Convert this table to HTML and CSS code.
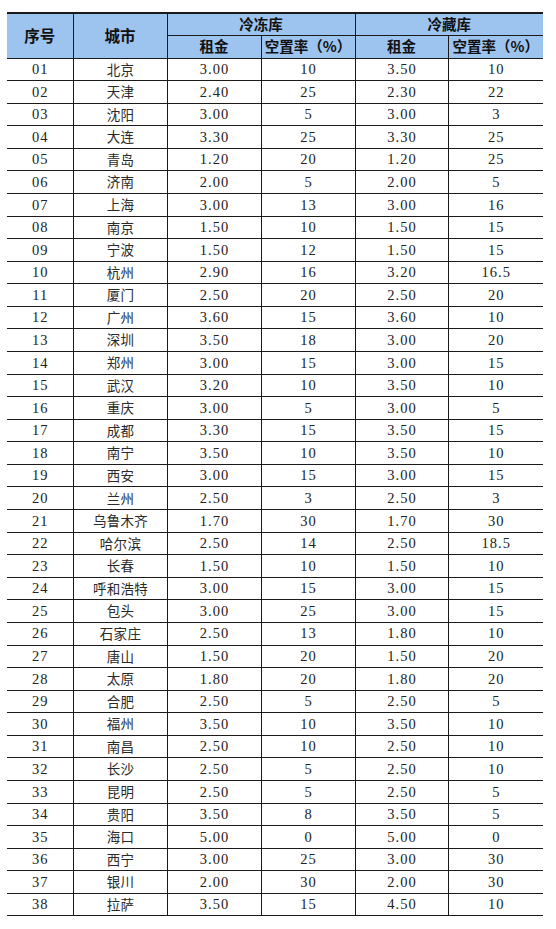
FILE: index.html
```html
<!DOCTYPE html>
<html lang="zh-CN">
<head>
<meta charset="utf-8">
<title>冷库租金与空置率</title>
<link rel="stylesheet" href="styles.css">
</head>
<body>
<table class="rent">
<colgroup>
<col class="c-no"><col class="c-city"><col class="c-a"><col class="c-b"><col class="c-c"><col class="c-d">
</colgroup>
<thead>
<tr class="h1"><th rowspan="2" class="big">序号</th><th rowspan="2" class="big">城市</th><th colspan="2">冷冻库</th><th colspan="2">冷藏库</th></tr>
<tr class="h2"><th>租金</th><th>空置率（%）</th><th>租金</th><th>空置率（%）</th></tr>
</thead>
<tbody>
<tr><td>01</td><td class="city">北京</td><td>3.00</td><td>10</td><td>3.50</td><td>10</td></tr>
<tr><td>02</td><td class="city">天津</td><td>2.40</td><td>25</td><td>2.30</td><td>22</td></tr>
<tr><td>03</td><td class="city">沈阳</td><td>3.00</td><td>5</td><td>3.00</td><td>3</td></tr>
<tr><td>04</td><td class="city">大连</td><td>3.30</td><td>25</td><td>3.30</td><td>25</td></tr>
<tr><td>05</td><td class="city">青岛</td><td>1.20</td><td>20</td><td>1.20</td><td>25</td></tr>
<tr><td>06</td><td class="city">济南</td><td>2.00</td><td>5</td><td>2.00</td><td>5</td></tr>
<tr><td>07</td><td class="city">上海</td><td>3.00</td><td>13</td><td>3.00</td><td>16</td></tr>
<tr><td>08</td><td class="city">南京</td><td>1.50</td><td>10</td><td>1.50</td><td>15</td></tr>
<tr><td>09</td><td class="city">宁波</td><td>1.50</td><td>12</td><td>1.50</td><td>15</td></tr>
<tr><td>10</td><td class="city">杭州</td><td>2.90</td><td>16</td><td>3.20</td><td>16.5</td></tr>
<tr><td>11</td><td class="city">厦门</td><td>2.50</td><td>20</td><td>2.50</td><td>20</td></tr>
<tr><td>12</td><td class="city">广州</td><td>3.60</td><td>15</td><td>3.60</td><td>10</td></tr>
<tr><td>13</td><td class="city">深圳</td><td>3.50</td><td>18</td><td>3.00</td><td>20</td></tr>
<tr><td>14</td><td class="city">郑州</td><td>3.00</td><td>15</td><td>3.00</td><td>15</td></tr>
<tr><td>15</td><td class="city">武汉</td><td>3.20</td><td>10</td><td>3.50</td><td>10</td></tr>
<tr><td>16</td><td class="city">重庆</td><td>3.00</td><td>5</td><td>3.00</td><td>5</td></tr>
<tr><td>17</td><td class="city">成都</td><td>3.30</td><td>15</td><td>3.50</td><td>15</td></tr>
<tr><td>18</td><td class="city">南宁</td><td>3.50</td><td>10</td><td>3.50</td><td>10</td></tr>
<tr><td>19</td><td class="city">西安</td><td>3.00</td><td>15</td><td>3.00</td><td>15</td></tr>
<tr><td>20</td><td class="city">兰州</td><td>2.50</td><td>3</td><td>2.50</td><td>3</td></tr>
<tr><td>21</td><td class="city">乌鲁木齐</td><td>1.70</td><td>30</td><td>1.70</td><td>30</td></tr>
<tr><td>22</td><td class="city">哈尔滨</td><td>2.50</td><td>14</td><td>2.50</td><td>18.5</td></tr>
<tr><td>23</td><td class="city">长春</td><td>1.50</td><td>10</td><td>1.50</td><td>10</td></tr>
<tr><td>24</td><td class="city">呼和浩特</td><td>3.00</td><td>15</td><td>3.00</td><td>15</td></tr>
<tr><td>25</td><td class="city">包头</td><td>3.00</td><td>25</td><td>3.00</td><td>15</td></tr>
<tr><td>26</td><td class="city">石家庄</td><td>2.50</td><td>13</td><td>1.80</td><td>10</td></tr>
<tr><td>27</td><td class="city">唐山</td><td>1.50</td><td>20</td><td>1.50</td><td>20</td></tr>
<tr><td>28</td><td class="city">太原</td><td>1.80</td><td>20</td><td>1.80</td><td>20</td></tr>
<tr><td>29</td><td class="city">合肥</td><td>2.50</td><td>5</td><td>2.50</td><td>5</td></tr>
<tr><td>30</td><td class="city">福州</td><td>3.50</td><td>10</td><td>3.50</td><td>10</td></tr>
<tr><td>31</td><td class="city">南昌</td><td>2.50</td><td>10</td><td>2.50</td><td>10</td></tr>
<tr><td>32</td><td class="city">长沙</td><td>2.50</td><td>5</td><td>2.50</td><td>10</td></tr>
<tr><td>33</td><td class="city">昆明</td><td>2.50</td><td>5</td><td>2.50</td><td>5</td></tr>
<tr><td>34</td><td class="city">贵阳</td><td>3.50</td><td>8</td><td>3.50</td><td>5</td></tr>
<tr><td>35</td><td class="city">海口</td><td>5.00</td><td>0</td><td>5.00</td><td>0</td></tr>
<tr><td>36</td><td class="city">西宁</td><td>3.00</td><td>25</td><td>3.00</td><td>30</td></tr>
<tr><td>37</td><td class="city">银川</td><td>2.00</td><td>30</td><td>2.00</td><td>30</td></tr>
<tr><td>38</td><td class="city">拉萨</td><td>3.50</td><td>15</td><td>4.50</td><td>10</td></tr>
</tbody>
</table>
</body>
</html>
```
FILE: styles.css
```css
html, body {
  margin: 0;
  padding: 0;
  background: #ffffff;
}

body {
  padding: 12px 0 0 7px;
}

.rent {
  border-collapse: collapse;
  table-layout: fixed;
  width: 536px;
  font-family: "Liberation Serif", "Noto Sans CJK SC", serif;
  color: #222222;
  border-top: 2px solid #1a1a1a;
}

.c-no { width: 66px; }
.c-city { width: 94px; }
.c-a { width: 94px; }
.c-b { width: 94px; }
.c-c { width: 93px; }
.c-d { width: 95px; }

.rent th,
.rent td {
  padding: 0;
  text-align: center;
  vertical-align: middle;
  border-bottom: 1px solid #1a1a1a;
  border-right: 1px solid #1a1a1a;
  line-height: 1;
  white-space: nowrap;
}

.rent th:last-child,
.rent td:last-child {
  border-right: none;
}

.rent tr.h2 th:nth-child(2) {
  border-right: 1px solid #1a1a1a;
}

.rent th {
  background: #9dc3ef;
  font-family: "Noto Sans CJK SC", sans-serif;
  font-weight: 700;
  font-size: 14.5px;
  color: #111111;
}

.rent th.big {
  font-size: 15.5px;
}

.rent tr.h1 { height: 22px; }
.rent tr.h2 { height: 23px; }

.rent tbody tr { height: 22.58px; }

.rent td {
  font-size: 14.5px;
  letter-spacing: 1px;
  padding-left: 1px;
}

.rent td.city {
  font-family: "Noto Sans CJK SC", sans-serif;
  font-weight: 400;
  font-size: 13.5px;
  letter-spacing: 0.3px;
  color: #2a2a2a;
}
```
